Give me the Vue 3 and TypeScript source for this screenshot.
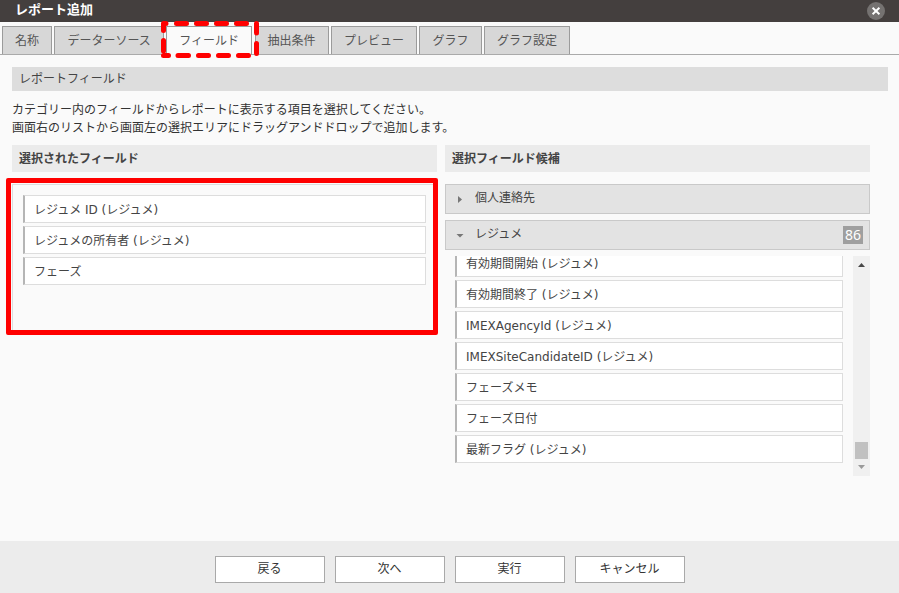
<script setup lang="ts">
import { ref } from 'vue'

const tabs: string[] = ['名称', 'データーソース', 'フィールド', '抽出条件', 'プレビュー', 'グラフ', 'グラフ設定']
const activeTab = ref<string>('フィールド')

const selectedFields: string[] = ['レジュメ ID (レジュメ)', 'レジュメの所有者 (レジュメ)', 'フェーズ']

const candidateFields: string[] = [
  '有効期間開始 (レジュメ)',
  '有効期間終了 (レジュメ)',
  'IMEXAgencyId (レジュメ)',
  'IMEXSiteCandidateID (レジュメ)',
  'フェーズメモ',
  'フェーズ日付',
  '最新フラグ (レジュメ)',
]

const actions: string[] = ['戻る', '次へ', '実行', 'キャンセル']
</script>

<template>
  <div class="dialog">
    <header class="titlebar">
      <h1 class="title">レポート追加</h1>
      <button class="close" type="button" aria-label="閉じる">
        <svg width="18" height="18" viewBox="0 0 18 18" aria-hidden="true">
          <circle cx="9" cy="9" r="9" fill="#757271" />
          <path d="M5.6 5.8L12.4 12.2M12.4 5.8L5.6 12.2" stroke="#fff" stroke-width="1.9" />
        </svg>
      </button>
    </header>

    <nav class="tabbar">
      <div class="tabs" role="tablist">
        <button
          v-for="tab in tabs"
          :key="tab"
          type="button"
          role="tab"
          class="tab"
          :class="{ active: tab === activeTab }"
          :aria-selected="tab === activeTab"
          @click="activeTab = tab"
        >
          {{ tab }}
        </button>
      </div>
      <svg class="tab-marker" width="100" height="40" viewBox="160 20 100 40" aria-hidden="true">
        <path
          d="M163.5 30.5V23.5H166M176.5 23.5H186.5M196.5 23.5H206.5M216.5 23.5H226.5M236.5 23.5H246.5M256.5 23.5V33M256.5 43.5V53.5M163.5 55.5H168.5M178 55.5H188.5M198.5 55.5H208.5M218.5 55.5H228.5M238.5 55.5H248.5M163.5 40.5V51"
          fill="none"
          stroke="#f00"
          stroke-width="5"
          stroke-linecap="round"
          stroke-linejoin="round"
        />
      </svg>
    </nav>

    <main class="content">
      <h2 class="section-title">レポートフィールド</h2>
      <p class="help">
        カテゴリー内のフィールドからレポートに表示する項目を選択してください。<br />
        画面右のリストから画面左の選択エリアにドラッグアンドドロップで追加します。
      </p>

      <div class="columns">
        <section class="column">
          <h3 class="column-title">選択されたフィールド</h3>
          <div class="drop-area">
            <ul class="fields">
              <li v-for="field in selectedFields" :key="field" class="field">{{ field }}</li>
            </ul>
            <div class="area-marker" aria-hidden="true"></div>
          </div>
        </section>

        <section class="column">
          <h3 class="column-title">選択フィールド候補</h3>
          <div class="groups">
            <button class="group" type="button" aria-expanded="false">
              <svg class="arrow" width="8" height="8" viewBox="0 0 8 8" aria-hidden="true">
                <path d="M2 1L6 4.5L2 8Z" fill="#777" />
              </svg>
              <span class="group-name">個人連絡先</span>
            </button>
            <button class="group" type="button" aria-expanded="true">
              <svg class="arrow" width="8" height="8" viewBox="0 0 8 8" aria-hidden="true">
                <path d="M0.5 3H7.5L4 6.5Z" fill="#777" />
              </svg>
              <span class="group-name">レジュメ</span>
              <span class="badge">86</span>
            </button>
            <div class="scroller">
              <ul class="fields candidates">
                <li v-for="field in candidateFields" :key="field" class="field">{{ field }}</li>
              </ul>
              <div class="scrollbar" aria-hidden="true">
                <svg width="17" height="17" viewBox="0 0 17 17">
                  <path d="M5 11H12L8.5 7Z" fill="#484848" />
                </svg>
                <div class="thumb"></div>
                <svg width="17" height="17" viewBox="0 0 17 17">
                  <path d="M5 6H12L8.5 10Z" fill="#9a9a9a" />
                </svg>
              </div>
            </div>
          </div>
        </section>
      </div>
    </main>

    <footer class="footer">
      <button v-for="action in actions" :key="action" class="action" type="button">{{ action }}</button>
    </footer>
  </div>
</template>

<style>
body {
  margin: 0;
  background: #fafafa;
}
</style>

<style scoped>
.dialog {
  display: flex;
  flex-direction: column;
  min-height: 100vh;
  color: #333;
  background: #fafafa;
  font: 12px/18px 'Noto Sans', 'Noto Sans CJK JP', sans-serif;
}

.dialog *,
.dialog {
  box-sizing: border-box;
}

button {
  margin: 0;
  font: inherit;
  color: inherit;
  border-radius: 0;
  cursor: pointer;
}

.titlebar {
  display: flex;
  justify-content: space-between;
  height: 22px;
  padding: 0 14px 0 15px;
  background: #443f3e;
}

.title {
  margin: 0;
  color: #fff;
  font-size: 13px;
  line-height: 18px;
}

.close {
  display: flex;
  align-items: center;
  padding: 0;
  border: 0;
  background: none;
}

.tabbar {
  position: relative;
  padding: 4px 2px 0;
  border-bottom: 1px solid #aaa;
}

.tabs {
  display: flex;
  justify-content: space-between;
  max-width: 568px;
}

.tab {
  height: 28px;
  padding: 0 12px;
  color: #555;
  background: #d7d7d7;
  border: 1px solid #9b9b9b;
  border-bottom: 0;
  white-space: nowrap;
}

.tab.active {
  height: 29px;
  margin-bottom: -1px;
  padding-bottom: 1px;
  background: #fafafa;
}

.tab-marker {
  position: absolute;
  top: -2px;
  left: 160px;
  pointer-events: none;
}

.content {
  flex: 1;
  padding: 12px 11px 24px 12px;
}

.section-title {
  margin: 0;
  padding: 3px 7px;
  font-size: 12px;
  font-weight: 400;
  color: #444;
  background: #ddd;
}

.help {
  margin: 10px 0 8px;
}

.columns {
  display: grid;
  grid-template-columns: 1fr 1fr;
  gap: 8px;
  margin-right: 18px;
}

.column-title {
  margin: 0 0 12px;
  padding: 5px 7px 4px;
  font-size: 12px;
  color: #444;
  background: #ebebeb;
}

.drop-area {
  position: relative;
  min-height: 148px;
  padding: 10px;
  border: 1px solid #ddd;
}

.area-marker {
  position: absolute;
  inset: -7px -2px -4px -7px;
  border: 5px solid #f00;
  border-radius: 2px;
  pointer-events: none;
}

.fields {
  display: flex;
  flex-direction: column;
  gap: 3px;
  margin: 0;
  padding: 0;
  font-family: 'DejaVu Sans', 'Noto Sans CJK JP', sans-serif;
  list-style: none;
}

.field {
  flex: none;
  height: 28px;
  padding: 5px 9px 3px;
  color: #444;
  background: #fff;
  border: 1px solid #ddd;
  border-left: 2px solid #b5b5b5;
}

.groups {
  display: flex;
  flex-direction: column;
  gap: 6px;
}

.group {
  display: flex;
  align-items: center;
  height: 30px;
  padding: 0 6px 0 10px;
  color: #444;
  background: #e3e3e3;
  border: 1px solid #c9c9c9;
}

.arrow {
  flex: none;
  margin-right: 11px;
}

.group-name {
  padding-bottom: 2px;
}

.badge {
  margin-left: auto;
  padding: 0 2px;
  color: #fff;
  background: #9f9f9f;
  font-size: 14px;
}

.scroller {
  display: flex;
  gap: 10px;
  height: 220px;
  padding-left: 10px;
}

.candidates {
  flex: 1;
  justify-content: flex-end;
  padding-bottom: 13px;
  overflow: hidden;
}

.scrollbar {
  display: flex;
  flex-direction: column;
  justify-content: space-between;
  width: 17px;
  background: #f0f0f0;
}

.thumb {
  height: 17px;
  margin: auto 2px 0;
  background: #c1c1c1;
}

.footer {
  display: flex;
  justify-content: center;
  gap: 10px;
  padding: 15px 10px 10px;
  background: #ececec;
}

.action {
  width: 110px;
  height: 27px;
  padding: 0 0 2px;
  background: #fff;
  border: 1px solid #a9a9a9;
}
</style>
